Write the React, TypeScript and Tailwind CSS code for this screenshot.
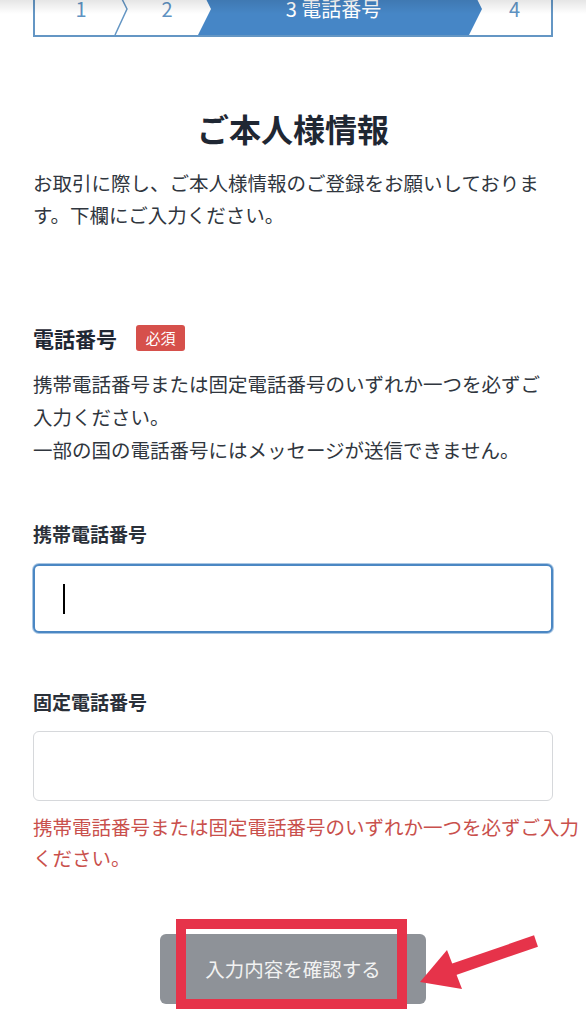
const steps = [
    { label: '1', width: 'w-[92px]', active: false },
    { label: '2', width: 'w-[80px]', active: false },
    { label: '3 電話番号', width: 'w-[271px] pr-[18px]', active: true },
    { label: '4', width: 'flex-1', active: false },
];

function Stepper() {
    return (
        <div className="relative mx-[33px] -mt-[19px] h-[56px] border-2 border-[#6496c4]">
            <svg className="absolute inset-0 h-full w-full" viewBox="0 0 516 52" preserveAspectRatio="none">
                <polyline points="79,0 92,26 80,52" fill="none" stroke="#6496c4" strokeWidth="1.5" />
                <polygon points="163,0 434,0 447,26 434,52 163,52 176,26" fill="#4686c6" />
            </svg>
            <div className="relative flex h-full items-center">
                {steps.map((s) => (
                    <div
                        key={s.label}
                        className={`${s.width} text-center text-[20px] ${s.active ? 'text-white' : 'text-[#5f93c3]'}`}
                    >
                        {s.label}
                    </div>
                ))}
            </div>
        </div>
    );
}

export default function App() {
    return (
        <div
            className="relative flex min-h-[1024px] flex-col overflow-hidden bg-white text-[#30363e]"
            style={{ fontFamily: '"Noto Sans CJK JP", "Noto Sans", sans-serif' }}
        >
            <div className="pointer-events-none absolute inset-x-0 top-0 z-10 h-[14px] bg-linear-to-b from-black/10 to-transparent" />
            <Stepper />

            <h1 className="mt-[70px] text-center text-[32px] font-bold leading-[42px] text-[#1f2733]">ご本人様情報</h1>
            <p className="mx-[33px] mt-[18px] text-[19.5px] leading-[32px]">
                お取引に際し、ご本人様情報のご登録をお願いしております。下欄にご入力ください。
            </p>

            <div className="mx-[33px] mt-[92px] flex items-center">
                <span className="text-[21px] font-bold leading-[30px] text-[#1f2733]">電話番号</span>
                <span className="ml-[19px] flex h-[26px] w-[49px] items-center justify-center rounded-[3px] bg-[#d6504b] text-[15px] text-white">
                    必須
                </span>
            </div>
            <p className="mx-[33px] mt-[14px] text-[19.5px] leading-[33px]">
                携帯電話番号または固定電話番号のいずれか一つを必ずご入力ください。
                <br />
                一部の国の電話番号にはメッセージが送信できません。
            </p>

            <label className="mx-[33px] mt-[54px] text-[19px] font-bold leading-[28px] text-[#2a3039]">携帯電話番号</label>
            <div className="mx-[33px] mt-[16px] flex h-[69px] items-center rounded-[6px] border-2 border-[#4b87c3] bg-white pl-[28px] shadow-[0_0_0_1px_#a9c6e3]">
                <span className="h-[30px] w-[2px] bg-black" />
            </div>

            <label className="mx-[33px] mt-[55px] text-[19px] font-bold leading-[28px] text-[#2a3039]">固定電話番号</label>
            <div className="mx-[33px] mt-[15px] h-[70px] rounded-[6px] border border-[#d6d8db] bg-white" />
            <p className="ml-[33px] mt-[10px] w-[550px] text-[19.5px] leading-[31px] text-[#c9504c]">
                携帯電話番号または固定電話番号のいずれか一つを必ずご入力ください。
            </p>

            <div className="relative mt-[61px] flex justify-center">
                <button className="h-[70px] w-[266px] rounded-[6px] bg-[#8e9298] text-[19.5px] text-[#f2f2f2]">
                    入力内容を確認する
                </button>
                <div className="absolute left-[176px] -top-[15px] h-[90px] w-[231px] border-[10px] border-[#e6334a]" />
                <svg className="absolute left-[410px] -top-[5px]" width="140" height="75" viewBox="0 0 140 75">
                    <line x1="42" y1="41" x2="126" y2="12" stroke="#e6334a" strokeWidth="12" />
                    <polygon points="10,53 37,21 52,60" fill="#e6334a" />
                </svg>
            </div>
        </div>
    );
}
